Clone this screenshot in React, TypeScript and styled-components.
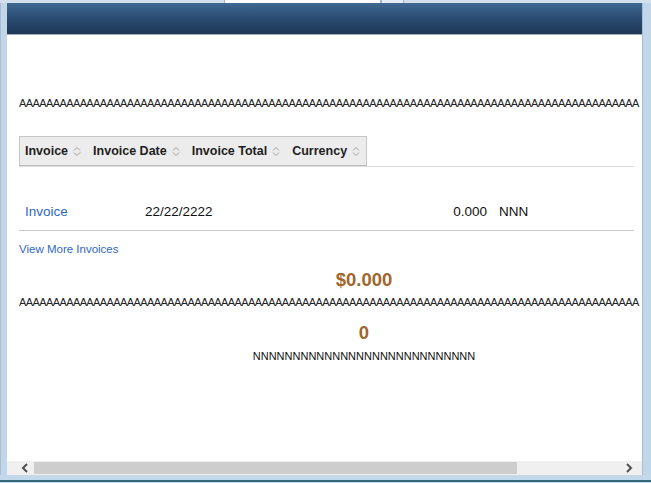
import React from "react";
import styled, { createGlobalStyle } from "styled-components";

const GlobalStyle = createGlobalStyle`
  html, body {
    margin: 0;
    padding: 0;
    background: #ffffff;
  }
  body {
    font-family: "Liberation Sans", Arial, sans-serif;
  }
`;

const Frame = styled.div`
  width: 651px;
  height: 483px;
  display: flex;
  flex-direction: column;
  background: #c4d7eb;
  overflow: hidden;
`;

const TopStrip = styled.div`
  height: 3px;
  display: flex;
  background: #d3dfeb;
`;

const Tab = styled.div<{ $w: number; $bg: string }>`
  width: ${(p) => p.$w}px;
  background: ${(p) => p.$bg};
  border-left: 1px solid #a9b6c4;
  border-right: 1px solid #a9b6c4;
`;

const Gap = styled.div<{ $w: number }>`
  width: ${(p) => p.$w}px;
`;

const Body = styled.div`
  flex: 1;
  display: flex;
  min-height: 0;
`;

const SideBorder = styled.div<{ $w: number }>`
  width: ${(p) => p.$w}px;
  background: #c2d6ea;
  border-left: 1px solid #a8bdd3;
`;

const Main = styled.div`
  flex: 1;
  display: flex;
  flex-direction: column;
  min-width: 0;
  background: #ffffff;
`;

const Header = styled.div`
  height: 32px;
  background: linear-gradient(to bottom, #3f6892 0%, #2b4c72 50%, #1d3654 100%);
  border-bottom: 1px solid #9fb1c4;
  box-sizing: border-box;
`;

const Viewport = styled.div`
  flex: 1;
  overflow: hidden;
  min-height: 0;
`;

const Content = styled.div`
  width: 690px;
  padding-left: 12px;
  display: flex;
  flex-direction: column;
`;

const Filler = styled.div<{ $mt: number }>`
  margin-top: ${(p) => p.$mt}px;
  font-size: 11px;
  line-height: 13px;
  color: #222;
  white-space: nowrap;
  letter-spacing: -0.6px;
`;

const Table = styled.div`
  width: 615px;
  margin-top: 26px;
`;

const HeadRow = styled.div`
  border-bottom: 1px solid #dcdcdc;
`;

const HeadBox = styled.div`
  display: inline-flex;
  align-items: center;
  height: 28px;
  padding: 0 0 0 5px;
  background: #ececec;
  border: 1px solid #c6c6c6;
  border-bottom-color: #bdbdbd;
  box-sizing: content-box;
  vertical-align: top;
`;

const HeadCell = styled.div`
  display: flex;
  align-items: center;
  gap: 5px;
  padding-right: 12px;
  font-size: 12.5px;
  font-weight: bold;
  color: #1e1e1e;
  &:last-child {
    padding-right: 6px;
  }
`;

const Row = styled.div`
  display: flex;
  align-items: center;
  padding: 37px 0 10px;
  border-bottom: 1px solid #c8c8c8;
  font-size: 13.5px;
  line-height: 16px;
  color: #111;
`;

const Cell = styled.div<{ $w: number; $right?: boolean }>`
  width: ${(p) => p.$w}px;
  box-sizing: border-box;
  padding: 0 6px;
  text-align: ${(p) => (p.$right ? "right" : "left")};
`;

const Link = styled.a<{ $size: number }>`
  color: #2f68c4;
  font-size: ${(p) => p.$size}px;
  text-decoration: none;
  cursor: pointer;
`;

const MoreLink = styled.div`
  margin-top: 10px;
  line-height: 14px;
`;

const Amount = styled.div<{ $mt: number }>`
  margin-top: ${(p) => p.$mt}px;
  text-align: center;
  font-size: 18.5px;
  line-height: 22px;
  font-weight: bold;
  color: #a0662a;
`;

const Caption = styled.div`
  margin-top: 6px;
  text-align: center;
  font-size: 11px;
  line-height: 13px;
  color: #111;
`;

const ScrollBar = styled.div`
  height: 14px;
  display: flex;
  align-items: center;
  background: #f0f0f0;
`;

const Arrow = styled.div<{ $pad: string }>`
  width: 27px;
  height: 14px;
  box-sizing: border-box;
  padding: ${(p) => p.$pad};
  display: flex;
  align-items: center;
  justify-content: center;
`;

const Track = styled.div`
  flex: 1;
  height: 12px;
  display: flex;
`;

const Thumb = styled.div`
  width: 483px;
  background: #cdcdcd;
`;

const BottomBorder = styled.div`
  height: 7px;
  background: #c4d8ec;
  border-bottom: 2px solid #33697a;
  box-sizing: border-box;
  margin-bottom: 1px;
`;

const SortIcon = () => (
  <svg width="8" height="11" viewBox="0 0 8 11">
    <path d="M1 4.5 L4 1.5 L7 4.5" fill="none" stroke="#a0a0a0" strokeWidth="1" />
    <path d="M1 6.5 L4 9.5 L7 6.5" fill="none" stroke="#a0a0a0" strokeWidth="1" />
  </svg>
);

const Chevron = ({ dir }: { dir: "left" | "right" }) => (
  <svg width="8" height="10" viewBox="0 0 8 10">
    <path
      d={dir === "left" ? "M6 1 L2 5 L6 9" : "M2 1 L6 5 L2 9"}
      fill="none"
      stroke="#505050"
      strokeWidth="2"
    />
  </svg>
);

const headers = ["Invoice", "Invoice Date", "Invoice Total", "Currency"];

export default function App() {
  const aLine = "A".repeat(92);
  return (
    <>
      <GlobalStyle />
      <Frame>
        <TopStrip>
          <Gap $w={224} />
          <Tab $w={155} $bg="#ffffff" />
          <Tab $w={21} $bg="#e6edf4" />
        </TopStrip>
        <Body>
          <SideBorder $w={6} />
          <Main>
            <Header />
            <Viewport>
              <Content>
                <Filler $mt={62}>{aLine}</Filler>
                <Table>
                  <HeadRow>
                    <HeadBox>
                      {headers.map((h) => (
                        <HeadCell key={h}>
                          {h}
                          <SortIcon />
                        </HeadCell>
                      ))}
                    </HeadBox>
                  </HeadRow>
                  <Row>
                    <Cell $w={120}>
                      <Link $size={13.5}>Invoice</Link>
                    </Cell>
                    <Cell $w={200}>22/22/2222</Cell>
                    <Cell $w={154} $right>
                      0.000
                    </Cell>
                    <Cell $w={80}>NNN</Cell>
                  </Row>
                </Table>
                <MoreLink>
                  <Link $size={11.5}>View More Invoices</Link>
                </MoreLink>
                <Amount $mt={13}>$0.000</Amount>
                <Filler $mt={5}>{aLine}</Filler>
                <Amount $mt={13}>0</Amount>
                <Caption>{"N".repeat(28)}</Caption>
              </Content>
            </Viewport>
            <ScrollBar>
              <Arrow $pad="0 0 0 8px">
                <Chevron dir="left" />
              </Arrow>
              <Track>
                <Thumb />
              </Track>
              <Arrow $pad="0">
                <Chevron dir="right" />
              </Arrow>
            </ScrollBar>
          </Main>
          <SideBorder $w={8} />
        </Body>
        <BottomBorder />
      </Frame>
    </>
  );
}
